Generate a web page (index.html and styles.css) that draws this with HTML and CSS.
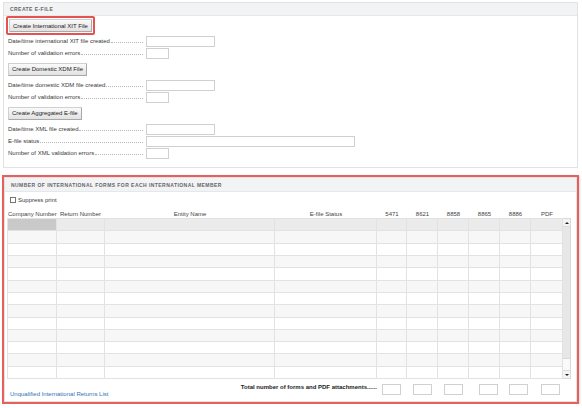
FILE: index.html
```html
<!DOCTYPE html>
<html>
<head>
<meta charset="utf-8">
<link rel="stylesheet" href="styles.css">
</head>
<body>
<div class="page">
  <section class="panel efile">
    <div class="panel-head">Create E-file</div>
    <div class="panel-body">
      <div class="btn-row first"><span class="focus-ring"><button class="btn">Create International XIT File</button></span></div>
      <div class="field"><span class="lead"><span class="t">Date/time international XIT file created</span><span class="dots"></span></span><span class="inp w-med"></span></div>
      <div class="field"><span class="lead"><span class="t">Number of validation errors</span><span class="dots"></span></span><span class="inp w-sm"></span></div>
      <div class="btn-row"><button class="btn">Create Domestic XDM File</button></div>
      <div class="field"><span class="lead"><span class="t">Date/time domestic XDM file created</span><span class="dots"></span></span><span class="inp w-med"></span></div>
      <div class="field"><span class="lead"><span class="t">Number of validation errors</span><span class="dots"></span></span><span class="inp w-sm"></span></div>
      <div class="btn-row"><button class="btn">Create Aggregated E-file</button></div>
      <div class="field"><span class="lead"><span class="t">Date/time XML file created</span><span class="dots"></span></span><span class="inp w-med"></span></div>
      <div class="field"><span class="lead"><span class="t">E-file status</span><span class="dots"></span></span><span class="inp w-lg"></span></div>
      <div class="field"><span class="lead"><span class="t">Number of XML validation errors</span><span class="dots"></span></span><span class="inp w-sm"></span></div>
    </div>
  </section>

  <div class="highlight">
    <section class="panel forms">
      <div class="panel-head">Number of international forms for each international member</div>
      <div class="forms-body">
        <div class="chk"><span class="box"></span><span>Suppress print</span></div>
        <div class="cols">
          <span class="l">Company Number</span>
          <span class="l">Return Number</span>
          <span>Entity Name</span>
          <span>E-file Status</span>
          <span>5471</span>
          <span>8621</span>
          <span>8858</span>
          <span>8865</span>
          <span>8886</span>
          <span>PDF</span>
          <span></span>
        </div>
        <div class="grid-wrap">
          <div class="rows">
            <div class="row sel"><i></i><i></i><i></i><i></i><i></i><i></i><i></i><i></i><i></i><i></i></div>
            <div class="row alt"><i></i><i></i><i></i><i></i><i></i><i></i><i></i><i></i><i></i><i></i></div>
            <div class="row"><i></i><i></i><i></i><i></i><i></i><i></i><i></i><i></i><i></i><i></i></div>
            <div class="row alt"><i></i><i></i><i></i><i></i><i></i><i></i><i></i><i></i><i></i><i></i></div>
            <div class="row"><i></i><i></i><i></i><i></i><i></i><i></i><i></i><i></i><i></i><i></i></div>
            <div class="row alt"><i></i><i></i><i></i><i></i><i></i><i></i><i></i><i></i><i></i><i></i></div>
            <div class="row"><i></i><i></i><i></i><i></i><i></i><i></i><i></i><i></i><i></i><i></i></div>
            <div class="row alt"><i></i><i></i><i></i><i></i><i></i><i></i><i></i><i></i><i></i><i></i></div>
            <div class="row"><i></i><i></i><i></i><i></i><i></i><i></i><i></i><i></i><i></i><i></i></div>
            <div class="row alt"><i></i><i></i><i></i><i></i><i></i><i></i><i></i><i></i><i></i><i></i></div>
            <div class="row"><i></i><i></i><i></i><i></i><i></i><i></i><i></i><i></i><i></i><i></i></div>
            <div class="row alt"><i></i><i></i><i></i><i></i><i></i><i></i><i></i><i></i><i></i><i></i></div>
            <div class="row"><i></i><i></i><i></i><i></i><i></i><i></i><i></i><i></i><i></i><i></i></div>
          </div>
          <div class="sb">
            <span class="sb-btn"><span class="tri up"></span></span>
            <span class="sb-thumb"></span>
            <span class="sb-track"></span>
            <span class="sb-btn"><span class="tri down"></span></span>
          </div>
        </div>
        <div class="footer">
          <div class="foot-left">
            <a class="link" href="#">Unqualified International Returns List</a>
            <span class="total">Total number of forms and PDF attachments......</span>
          </div>
          <span class="inp tot"></span>
          <span class="inp tot"></span>
          <span class="inp tot"></span>
          <span class="inp tot"></span>
          <span class="inp tot"></span>
          <span class="inp tot"></span>
        </div>
      </div>
    </section>
  </div>
</div>
</body>
</html>
```

FILE: styles.css
```css
* { box-sizing: border-box; }

body {
  margin: 0;
  background: #fff;
  font-family: "Liberation Sans", Arial, sans-serif;
  font-size: 6px;
  color: #3a3a3a;
}

.page {
  width: 582px;
  padding: 2px 0 0 2px;
}

.panel {
  border: 1px solid #e2e2e2;
  background: #fff;
}

.efile {
  margin-left: 1px;
  width: 575px;
}

.panel-head {
  height: 13px;
  background: #f2f3f5;
  border-bottom: 1px solid #e7e7e7;
  padding-left: 6px;
  display: flex;
  align-items: center;
  font-size: 5px;
  font-weight: bold;
  letter-spacing: 0.45px;
  text-transform: uppercase;
  color: #666;
}

.efile .panel-body {
  padding: 0 4px 8px;
}

.btn-row {
  height: 20px;
  display: flex;
  align-items: center;
}

.btn-row.first {
  height: 19px;
}

.focus-ring {
  display: inline-flex;
  margin-left: -2px;
  padding: 1px;
  border: 2px solid #e65252;
  border-radius: 2px;
}

.btn {
  height: 13px;
  padding: 0 3px;
  margin: 0;
  font-family: inherit;
  font-size: 6px;
  color: #222;
  background: linear-gradient(#fafafa, #e2e2e2);
  border: 1px solid #a8a8a8;
  border-top-color: #d0d0d0;
  border-left-color: #d0d0d0;
  border-radius: 1px;
}

.field {
  height: 12px;
  display: flex;
  align-items: center;
}

.lead {
  width: 138px;
  padding-right: 3px;
  display: flex;
  align-items: flex-end;
  white-space: nowrap;
}

.dots {
  flex: 1;
  margin: 0 0 1.5px 1px;
  border-bottom: 1px dotted #b8b8b8;
}

.inp {
  display: inline-block;
  height: 11px;
  border: 1px solid #d0d0d0;
  background: #fff;
}

.w-med { width: 69px; }
.w-sm { width: 23px; }
.w-lg { width: 209px; }

.highlight {
  margin-top: 7px;
  width: 577px;
  border: 2px solid #e6605f;
  box-shadow: 1px 1px 2px rgba(0, 0, 0, 0.15);
}

.forms .panel-head {
  height: 14px;
}

.forms-body {
  padding: 2px 2px 4px;
}

.chk {
  height: 12px;
  display: flex;
  align-items: center;
  gap: 2px;
  padding-left: 3px;
}

.box {
  width: 6px;
  height: 6px;
  border: 1px solid #777;
  background: #fff;
}

.cols {
  height: 12px;
  display: grid;
  grid-template-columns: 50px 48px 170px 102px 30px 31px 31px 31px 31px 32px 8px;
  align-items: end;
  padding-bottom: 1px;
  color: #444;
  text-align: center;
  white-space: nowrap;
}

.cols .l {
  text-align: left;
  padding-left: 1px;
}

.cols .l + .l {
  padding-left: 3px;
}

.grid-wrap {
  display: flex;
  height: 161px;
}

.rows {
  width: 556px;
  display: flex;
  flex-direction: column;
  border-top: 1px solid #e2e2e2;
}

.row {
  height: 12.35px;
  display: grid;
  grid-template-columns: 50px 48px 170px 102px 30px 31px 31px 31px 31px 32px;
  border-bottom: 1px solid #e2e2e2;
  background: #fff;
}

.row.alt {
  background: #f7f7f7;
}

.row.sel {
  background: #ebebeb;
}

.row.sel i:first-child {
  background: #c9c9c9;
}

.row i {
  border-right: 1px solid #e2e2e2;
}

.row i:first-child {
  border-left: 1px solid #e2e2e2;
}

.sb {
  width: 8px;
  display: flex;
  flex-direction: column;
  border: 1px solid #d8d8d8;
  border-left: none;
  background: #fafafa;
}

.sb-btn {
  height: 8px;
  display: flex;
  align-items: center;
  justify-content: center;
  background: #f3f3f3;
  border-bottom: 1px solid #ddd;
}

.sb-btn:last-child {
  border-bottom: none;
  border-top: 1px solid #ddd;
}

.sb-thumb {
  flex: 1;
  background: #e7e7e7;
  border-bottom: 1px solid #d8d8d8;
}

.sb-track {
  height: 11px;
  background: #fafafa;
}

.tri {
  width: 0;
  height: 0;
  border-left: 2px solid transparent;
  border-right: 2px solid transparent;
}

.tri.up { border-bottom: 2px solid #222; }
.tri.down { border-top: 2px solid #222; }

.footer {
  margin-top: 5px;
  height: 13px;
  display: grid;
  grid-template-columns: 375px 31px 31px 35px 30px 32px 20px;
}

.foot-left {
  display: flex;
  justify-content: space-between;
  padding: 0 5px 0 3px;
}

.link {
  align-self: flex-end;
  color: #2f73b5;
  text-decoration: none;
}

.total {
  align-self: flex-start;
  font-weight: bold;
  color: #222;
}

.inp.tot {
  width: 19px;
  height: 11px;
}
```
